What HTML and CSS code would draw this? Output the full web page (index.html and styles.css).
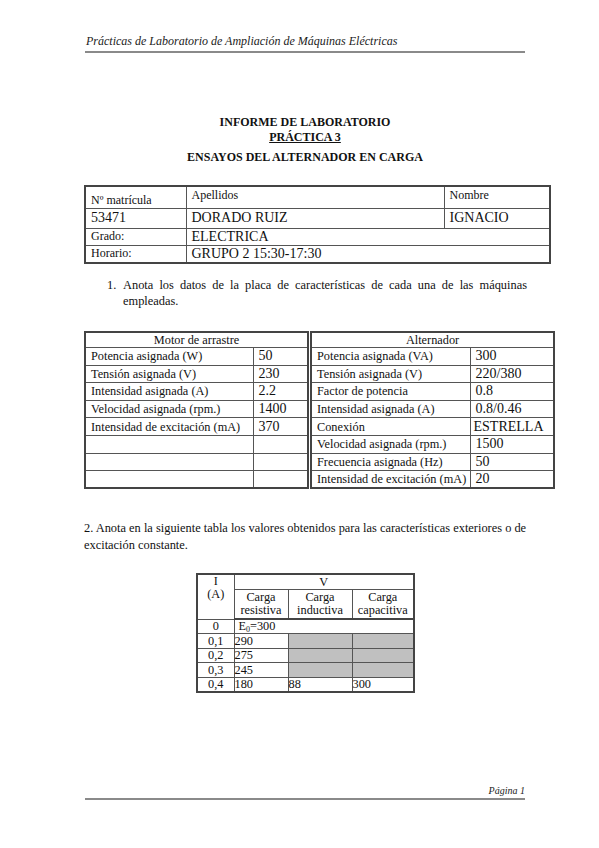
FILE: index.html
```html
<!DOCTYPE html>
<html lang="es">
<head>
<meta charset="utf-8">
<title>Informe de laboratorio - Práctica 3</title>
<link rel="stylesheet" href="styles.css">
</head>
<body>
<div class="page">
  <div class="header">Prácticas de Laboratorio de Ampliación de Máquinas Eléctricas</div>

  <div class="title">
    <div>INFORME DE LABORATORIO</div>
    <div class="underline">PRÁCTICA 3</div>
    <div class="subtitle">ENSAYOS DEL ALTERNADOR EN CARGA</div>
  </div>

  <table class="t1">
    <colgroup><col class="c1"><col class="c2"><col class="c3"></colgroup>
    <tr class="r1">
      <td class="lbl bottom">Nº matrícula</td>
      <td class="lbl">Apellidos</td>
      <td class="lbl">Nombre</td>
    </tr>
    <tr class="r2">
      <td class="val">53471</td>
      <td class="val">DORADO RUIZ</td>
      <td class="val">IGNACIO</td>
    </tr>
    <tr class="r3">
      <td class="lbl">Grado:</td>
      <td class="val" colspan="2">ELECTRICA</td>
    </tr>
    <tr class="r4">
      <td class="lbl">Horario:</td>
      <td class="val" colspan="2">GRUPO 2 15:30-17:30</td>
    </tr>
  </table>

  <div class="item">
    <span class="num">1.</span>
    <p class="itemtext">Anota los datos de la placa de características de cada una de las máquinas empleadas.</p>
  </div>

  <div class="plates">
    <table class="t2 left">
      <colgroup><col class="l1"><col class="l2"></colgroup>
      <tr class="hd"><td colspan="2" class="center">Motor de arrastre</td></tr>
      <tr><td>Potencia asignada (W)</td><td class="val">50</td></tr>
      <tr><td>Tensión asignada (V)</td><td class="val">230</td></tr>
      <tr><td>Intensidad asignada (A)</td><td class="val">2.2</td></tr>
      <tr><td>Velocidad asignada (rpm.)</td><td class="val">1400</td></tr>
      <tr><td>Intensidad de excitación (mA)</td><td class="val">370</td></tr>
      <tr><td></td><td></td></tr>
      <tr><td></td><td></td></tr>
      <tr><td></td><td></td></tr>
    </table>
    <table class="t2 right">
      <colgroup><col class="a1"><col class="a2"></colgroup>
      <tr class="hd"><td colspan="2" class="center">Alternador</td></tr>
      <tr><td>Potencia asignada (VA)</td><td class="val">300</td></tr>
      <tr><td>Tensión asignada (V)</td><td class="val">220/380</td></tr>
      <tr><td>Factor de potencia</td><td class="val">0.8</td></tr>
      <tr><td>Intensidad asignada (A)</td><td class="val">0.8/0.46</td></tr>
      <tr><td>Conexión</td><td class="val tight">ESTRELLA</td></tr>
      <tr><td>Velocidad asignada (rpm.)</td><td class="val">1500</td></tr>
      <tr><td>Frecuencia asignada (Hz)</td><td class="val">50</td></tr>
      <tr><td>Intensidad de excitación (mA)</td><td class="val">20</td></tr>
    </table>
  </div>

  <p class="para">2. Anota en la siguiente tabla los valores obtenidos para las características exteriores o de<br>excitación constante.</p>

  <table class="t3">
    <colgroup><col class="k1"><col class="k2"><col class="k3"><col class="k4"></colgroup>
    <tr class="v">
      <td rowspan="2" class="center top">I<br>(A)</td>
      <td colspan="3" class="center">V</td>
    </tr>
    <tr class="carga">
      <td class="center">Carga<br>resistiva</td>
      <td class="center">Carga<br>inductiva</td>
      <td class="center">Carga<br>capacitiva</td>
    </tr>
    <tr><td class="center">0</td><td colspan="3" class="pad">E<sub>0</sub>=300</td></tr>
    <tr><td class="center">0,1</td><td>290</td><td class="gray"></td><td class="gray"></td></tr>
    <tr><td class="center">0,2</td><td>275</td><td class="gray"></td><td class="gray"></td></tr>
    <tr><td class="center">0,3</td><td>245</td><td class="gray"></td><td class="gray"></td></tr>
    <tr><td class="center">0,4</td><td>180</td><td>88</td><td>300</td></tr>
  </table>

  <div class="footer">Página 1</div>
</div>
</body>
</html>
```

FILE: styles.css
```css
html, body {
  margin: 0;
  padding: 0;
  background: #ffffff;
}

body {
  font-family: "Liberation Serif", "Times New Roman", serif;
  color: #111111;
}

.page {
  width: 599px;
  padding-top: 34px;
}

.header {
  margin-left: 85px;
  width: 439px;
  padding-left: 1px;
  padding-bottom: 3px;
  font-style: italic;
  font-size: 12px;
  line-height: 14px;
  border-bottom: 2px solid #8a8a8a;
  color: #222;
}

.title {
  margin-top: 62px;
  margin-left: 85px;
  width: 440px;
  text-align: center;
  font-weight: bold;
  font-size: 12px;
  line-height: 15px;
}

.underline {
  text-decoration: underline;
}

.subtitle {
  margin-top: 5px;
}

table {
  border-collapse: collapse;
  table-layout: fixed;
}

td {
  padding: 0 0 0 5px;
  border: 1px solid #555;
  font-size: 12.3px;
  line-height: 14px;
  vertical-align: middle;
  white-space: nowrap;
  overflow: hidden;
}

/* Table 1 */
.t1 {
  margin-top: 20px;
  margin-left: 84px;
  width: 465px;
  border: 2px solid #444;
}
.t1 .c1 { width: 101px; }
.t1 .c2 { width: 258px; }
.t1 .c3 { width: 106px; }

.t1 .r1 { height: 22px; }
.t1 .r2 { height: 20px; }
.t1 .r3 { height: 17px; }
.t1 .r4 { height: 18px; }

.t1 .lbl { font-size: 12px; vertical-align: top; padding-top: 1px; }
.t1 .lbl.bottom { vertical-align: bottom; padding-top: 0; padding-bottom: 1px; }
.t1 .r3 .lbl, .t1 .r4 .lbl { padding-top: 0; }
.t1 .val { font-size: 14px; line-height: 16px; }

/* Item 1 */
.item {
  display: flex;
  margin-top: 13px;
  margin-left: 107px;
  width: 420px;
  font-size: 12.4px;
  line-height: 16px;
}
.num {
  width: 16px;
  flex: none;
}
.itemtext {
  margin: 0;
  flex: 1;
  text-align: justify;
}

/* Table 2 */
.plates {
  display: flex;
  gap: 1px;
  margin-top: 22px;
  margin-left: 84px;
}
.t2 {
  border: 2px solid #444;
}
.t2 tr { height: 17.6px; }
.t2 tr.hd { height: 15px; }
.t2 .val { font-size: 14px; line-height: 16px; }
.t2 .val.tight { padding-left: 3px; }
.t2.left { width: 223px; }
.t2 .l1 { width: 168px; }
.t2 .l2 { width: 55px; }
.t2.right { width: 243px; }
.t2 .a1 { width: 159px; }
.t2 .a2 { width: 84px; }

.center {
  text-align: center;
  padding-left: 0;
}
.top { vertical-align: top; }

/* Paragraph 2 */
.para {
  margin: 31px 0 0 84px;
  font-size: 12.4px;
  line-height: 17px;
}

/* Table 3 */
.t3 {
  margin-top: 19px;
  margin-left: 196px;
  width: 217px;
  border: 2px solid #444;
}
.t3 .k1 { width: 37px; }
.t3 .k2 { width: 54px; }
.t3 .k3 { width: 64px; }
.t3 .k4 { width: 62px; }
.t3 td { padding-left: 0; line-height: 13px; overflow: visible; }
.t3 tr { height: 14.5px; }
.t3 tr.v { height: 15px; }
.t3 tr.carga { height: 30px; }
.t3 tr.carga td { border-bottom: 2px solid #444; }
.t3 td.pad { padding-left: 4px; }
.t3 .gray { background: #c0c0c0; }
.t3 sub { font-size: 8px; line-height: 0; vertical-align: -2px; }

/* Footer */
.footer {
  margin-top: 92px;
  margin-left: 85px;
  width: 440px;
  text-align: right;
  font-style: italic;
  font-size: 10px;
  line-height: 12px;
  padding-bottom: 1px;
  border-bottom: 2px solid #8a8a8a;
  color: #222;
}
```
